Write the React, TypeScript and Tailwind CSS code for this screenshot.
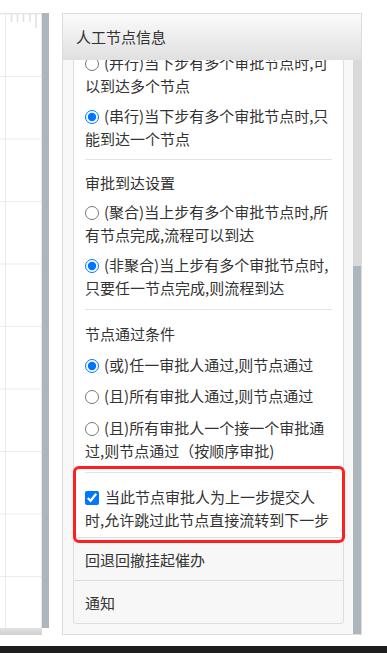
import React from "react"

type OptProps = { name: string; checked?: boolean; lines: string[]; className?: string }

function Opt({ name, checked, lines, className = "" }: OptProps) {
  return (
    <label className={`block whitespace-nowrap ${className}`}>
      <input
        type="radio"
        name={name}
        defaultChecked={checked}
        className="m-0 mr-[5px] w-[14px] h-[14px] align-[-2px]"
      />
      {lines.map((l, i) => (
        <React.Fragment key={i}>
          {i > 0 && <br />}
          {l}
        </React.Fragment>
      ))}
    </label>
  )
}

function Divider({ className = "" }: { className?: string }) {
  return <div className={`h-px bg-[#e4e4e4] ${className}`} />
}

function Canvas() {
  return (
    <div className="w-[49px] flex flex-col shrink-0">
      <div className="flex flex-1 min-h-0">
        {/* grid */}
        <div className="w-[42px] border-t border-r border-[#e6e6e6] bg-white bg-[linear-gradient(#ebebeb_1px,transparent_1px),linear-gradient(90deg,#ebebeb_1px,transparent_1px)] bg-[size:62.5px_62.5px] bg-[position:5px_62px]">
          <svg width="41" height="16" className="block">
            <g stroke="#e2e2e2" strokeWidth="1.6">
              <line x1="11.5" y1="0" x2="11.5" y2="8" />
              <line x1="17.5" y1="0" x2="17.5" y2="8" />
              <line x1="23.5" y1="0" x2="23.5" y2="8" />
              <line x1="30" y1="0" x2="30" y2="8" />
              <line x1="36" y1="0" x2="36" y2="14" />
            </g>
          </svg>
        </div>
        <div className="w-[7px] bg-[#adb5bd]" />
      </div>
      <div className="flex h-[7px]">
        <div className="w-[42px] bg-linear-to-b from-[#e2e2e2] to-[#cfcfcf]" />
        <div className="w-[7px] bg-white" />
      </div>
    </div>
  )
}

export default function App() {
  return (
    <div className="w-[387px] h-[653px] bg-white overflow-hidden flex flex-col text-[#333] font-['Noto_Sans_CJK_SC','Noto_Sans',sans-serif]">
      <div className="flex pt-[13px] h-[635px]">
        <Canvas />

        {/* node panel */}
        <div className="ml-[13px] w-[300px] flex flex-col border border-[#dcdcdc] bg-[#f8f8f8]">
          <div className="h-[46px] shrink-0 flex items-center px-[13px] text-[15px] bg-linear-to-b from-[#fbfbfb] to-[#e0e0e0]">
            人工节点信息
          </div>

          <div className="flex flex-1 min-h-0">
            <div className="flex-1 overflow-hidden pl-[10px] pr-[9px]">
              <div className="-mt-[9px] bg-white border-x border-b border-[#dedede] rounded-b-[4px] text-[15px] leading-[23px]">
                <div className="px-[11px] pb-[6px]">
                  <Opt name="next" lines={["(并行)当下步有多个审批节点时,可", "以到达多个节点"]} />
                  <Opt name="next" checked className="mt-[7px]" lines={["(串行)当下步有多个审批节点时,只", "能到达一个节点"]} />
                  <Divider className="mt-[9px]" />

                  <div className="mt-[11px]">审批到达设置</div>
                  <Opt name="arrive" className="mt-[6px]" lines={["(聚合)当上步有多个审批节点时,所", "有节点完成,流程可以到达"]} />
                  <Opt name="arrive" checked className="mt-[7px]" lines={["(非聚合)当上步有多个审批节点时,", "只要任一节点完成,则流程到达"]} />
                  <Divider className="mt-[10px]" />

                  <div className="mt-[12px]">节点通过条件</div>
                  <Opt name="pass" checked className="mt-[8px]" lines={["(或)任一审批人通过,则节点通过"]} />
                  <Opt name="pass" className="mt-[8px]" lines={["(且)所有审批人通过,则节点通过"]} />
                  <Opt name="pass" className="mt-[9px]" lines={["(且)所有审批人一个接一个审批通", "过,则节点通过（按顺序审批)"]} />

                  <div className="relative mt-[10px]">
                    <Divider />
                    <label className="block mt-[12px] whitespace-nowrap">
                      <input type="checkbox" defaultChecked className="m-0 mr-[6px] w-[14px] h-[14px] align-[-2px]" />
                      当此节点审批人为上一步提交人
                      <br />
                      时,允许跳过此节点直接流转到下一步
                    </label>
                    <div className="absolute -top-[6px] -left-[12px] -right-[13px] -bottom-[12px] z-10 border-[3px] border-[#ff1f1f] rounded-[6px] pointer-events-none" />
                  </div>
                </div>

                <div className="h-[43px] flex items-center px-[11px] bg-[#f7f7f7] border-t border-[#dedede]">
                  回退回撤挂起催办
                </div>
                <div className="h-[43px] flex items-center px-[11px] bg-[#f7f7f7] border-t border-[#dedede] rounded-b-[4px]">
                  通知
                </div>
              </div>
            </div>

            {/* scrollbar */}
            <div className="w-[8px] flex flex-col bg-[#d9d9d9]">
              <div className="h-[206px]" />
              <div className="flex-1 bg-[#adb5bd]" />
            </div>
          </div>
        </div>
      </div>

      <div className="mt-[11px] h-[7px] bg-[#1e1e1e]" />
    </div>
  )
}
